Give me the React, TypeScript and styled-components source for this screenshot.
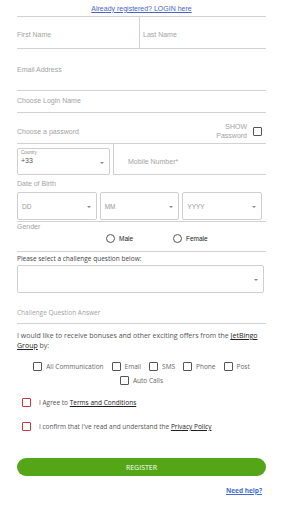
import React from "react";
import styled, { createGlobalStyle } from "styled-components";

const GlobalStyle = createGlobalStyle`
  body {
    margin: 0;
    background: #fff;
    font-family: "Liberation Sans", Arial, sans-serif;
  }
`;

const Page = styled.div`
  width: 296px;
  padding-left: 17px;
  box-sizing: border-box;
`;

const Form = styled.div`
  width: 249px;
  display: flex;
  flex-direction: column;
`;

const TopLink = styled.a`
  height: 17px;
  display: flex;
  align-items: center;
  justify-content: center;
  font-size: 7px;
  color: #4a63c5;
  text-decoration: underline;
  border-bottom: 1px solid #d2d2d2;
  box-sizing: border-box;
`;

const Row = styled.div<{ $h: number; $end?: boolean }>`
  height: ${(p) => p.$h}px;
  display: flex;
  align-items: ${(p) => (p.$end ? "flex-end" : "stretch")};
  box-sizing: border-box;
  border-bottom: 1px solid #d2d2d2;
`;

const Field = styled.div<{ $top: number; $w?: number }>`
  flex: ${(p) => (p.$w ? `0 0 ${p.$w}px` : "1")};
  padding-top: ${(p) => p.$top}px;
  font-size: 7px;
  color: #a3a3a3;
  box-sizing: border-box;
`;

const NameCell = styled(Field)`
  border-right: 1px solid #d2d2d2;
`;

const LastCell = styled(Field)`
  padding-left: 3px;
`;

const PasswordField = styled(Field)`
  align-self: center;
`;

const ShowBox = styled.div`
  display: flex;
  align-items: center;
  gap: 6px;
  padding-right: 4px;
  padding-bottom: 3px;
`;

const ShowText = styled.div`
  font-size: 7px;
  color: #a3a3a3;
  text-align: right;
  line-height: 9px;
`;

const Check = styled.span<{ $red?: boolean }>`
  display: inline-block;
  width: 7px;
  height: 7px;
  border: 1px solid ${(p) => (p.$red ? "#c9373a" : "#555")};
  border-radius: 1px;
  flex: 0 0 auto;
`;

const PhoneRow = styled.div`
  height: 31px;
  display: flex;
  align-items: flex-end;
`;

const CountryBox = styled.div`
  width: 93px;
  height: 27px;
  box-sizing: border-box;
  border: 1px solid #cfcfcf;
  border-radius: 2px;
  padding: 1px 4px 0 3px;
  position: relative;
`;

const Tiny = styled.div`
  font-size: 4.5px;
  color: #888;
  line-height: 6px;
`;

const CountryValue = styled.div`
  font-size: 7px;
  color: #555;
  margin-top: 1px;
`;

const Caret = styled.span`
  position: absolute;
  right: 5px;
  top: 50%;
  width: 0;
  height: 0;
  border-left: 2px solid transparent;
  border-right: 2px solid transparent;
  border-top: 2px solid #888;
`;

const Mobile = styled.div`
  flex: 1;
  height: 31px;
  margin-left: 3px;
  border-left: 1px solid #d2d2d2;
  border-bottom: 1px solid #d2d2d2;
  box-sizing: border-box;
  padding: 14px 0 0 14px;
  font-size: 7px;
  color: #a3a3a3;
`;

const Label = styled.div<{ $h: number }>`
  height: ${(p) => p.$h}px;
  display: flex;
  align-items: center;
  font-size: 7px;
  color: #a3a3a3;
`;

const DobRow = styled.div`
  display: flex;
  gap: 3px;
  padding-bottom: 1px;
  border-bottom: 1px solid #d2d2d2;
  padding-right: 4px;
`;

const SelectBox = styled.div<{ $h: number }>`
  flex: 1;
  height: ${(p) => p.$h}px;
  box-sizing: border-box;
  border: 1px solid #cfcfcf;
  border-radius: 2px;
  position: relative;
  display: flex;
  align-items: center;
  padding-left: 4px;
  font-size: 6.5px;
  color: #999;
`;

const GenderRow = styled.div`
  height: 30px;
  display: flex;
  border-bottom: 1px solid #d2d2d2;
  box-sizing: border-box;
`;

const GenderLabel = styled.div`
  width: 89px;
  padding-top: 1px;
  font-size: 7px;
  color: #a3a3a3;
`;

const Radio = styled.label`
  display: flex;
  align-items: center;
  gap: 4px;
  height: 9px;
  margin-top: 12px;
  width: 67px;
  font-size: 6.5px;
  color: #222;
`;

const Circle = styled.span`
  width: 7px;
  height: 7px;
  border: 1px solid #555;
  border-radius: 50%;
`;

const ChallengeLabel = styled.div`
  height: 13px;
  display: flex;
  align-items: center;
  font-family: "Open Sans", sans-serif;
  font-size: 6.5px;
  color: #444;
`;

const QuestionWrap = styled.div`
  display: flex;
  padding-right: 2px;
`;

const Answer = styled.div`
  height: 31px;
  box-sizing: border-box;
  border-bottom: 1px solid #d2d2d2;
  padding-top: 15px;
  font-family: "Open Sans", sans-serif;
  font-size: 6.5px;
  color: #a3a3a3;
`;

const Offers = styled.p`
  margin: 7px 0 0;
  font-family: "Open Sans", sans-serif;
  font-size: 7px;
  line-height: 10px;
  color: #555;
`;

const DarkLink = styled.a`
  color: #222;
  text-decoration: underline;
`;

const CheckWrap = styled.div`
  display: flex;
  flex-wrap: wrap;
  justify-content: center;
  column-gap: 8px;
  row-gap: 5px;
  margin-top: 11px;
`;

const CheckItem = styled.label`
  display: flex;
  align-items: center;
  gap: 4px;
  font-family: "Open Sans", sans-serif;
  font-size: 6.5px;
  color: #666;
  height: 9px;
`;

const Consent = styled.div<{ $mt: number }>`
  display: flex;
  align-items: center;
  gap: 8px;
  margin-top: ${(p) => p.$mt}px;
  padding-left: 5px;
  font-family: "Open Sans", sans-serif;
  font-size: 6.5px;
  color: #555;
  height: 9px;
`;

const Register = styled.button`
  margin-top: 27px;
  height: 18px;
  border: none;
  border-radius: 9px;
  background: #55a616;
  color: #fff;
  font-family: "Open Sans", sans-serif;
  font-size: 7px;
  padding: 0;
`;

const Help = styled.a`
  align-self: flex-end;
  margin: 10px 4px 0 0;
  font-family: "Open Sans", sans-serif;
  font-weight: 700;
  font-size: 6.5px;
  color: #3d6fd0;
  text-decoration: underline;
`;

export default function App() {
  return (
    <Page>
      <GlobalStyle />
      <Form>
        <TopLink>Already registered? LOGIN here</TopLink>
        <Row $h={32}>
          <NameCell $w={123} $top={14}>First Name</NameCell>
          <LastCell $top={14}>Last Name</LastCell>
        </Row>
        <Row $h={42}>
          <Field $top={17}>Email Address</Field>
        </Row>
        <Row $h={22}>
          <Field $top={6}>Choose Login Name</Field>
        </Row>
        <Row $h={31} $end>
          <PasswordField $top={6}>Choose a password</PasswordField>
          <ShowBox>
            <ShowText>
              SHOW
              <br />
              Password
            </ShowText>
            <Check />
          </ShowBox>
        </Row>
        <PhoneRow>
          <CountryBox>
            <Tiny>Country</Tiny>
            <CountryValue>+33</CountryValue>
            <Caret />
          </CountryBox>
          <Mobile>Mobile Number*</Mobile>
        </PhoneRow>
        <Label $h={17}>Date of Birth</Label>
        <DobRow>
          {["DD", "MM", "YYYY"].map((d) => (
            <SelectBox key={d} $h={28}>
              {d}
              <Caret />
            </SelectBox>
          ))}
        </DobRow>
        <GenderRow>
          <GenderLabel>Gender</GenderLabel>
          <Radio>
            <Circle />
            Male
          </Radio>
          <Radio>
            <Circle />
            Female
          </Radio>
        </GenderRow>
        <ChallengeLabel>Please select a challenge question below:</ChallengeLabel>
        <QuestionWrap>
          <SelectBox $h={28}>
            <Caret />
          </SelectBox>
        </QuestionWrap>
        <Answer>Challenge Question Answer</Answer>
        <Offers>
          I would like to receive bonuses and other exciting offers from the{" "}
          <DarkLink>JetBingo</DarkLink> <DarkLink>Group</DarkLink> by:
        </Offers>
        <CheckWrap>
          {["All Communication", "Email", "SMS", "Phone", "Post", "Auto Calls"].map((c) => (
            <CheckItem key={c}>
              <Check />
              {c}
            </CheckItem>
          ))}
        </CheckWrap>
        <Consent $mt={13}>
          <Check $red />
          <span>
            I Agree to <DarkLink>Terms and Conditions</DarkLink>
          </span>
        </Consent>
        <Consent $mt={15}>
          <Check $red />
          <span>
            I confirm that I've read and understand the <DarkLink>Privacy Policy</DarkLink>
          </span>
        </Consent>
        <Register>REGISTER</Register>
        <Help>Need help?</Help>
      </Form>
    </Page>
  );
}
